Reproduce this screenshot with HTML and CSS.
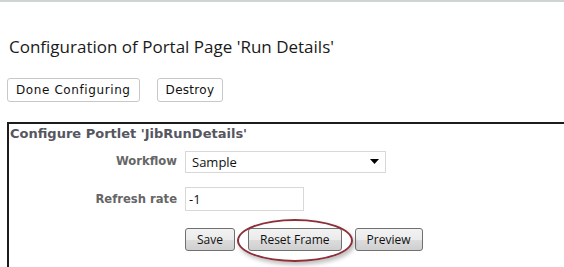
FILE: index.html
```html
<!DOCTYPE html>
<html lang="en">
<head>
    <meta charset="UTF-8">
    <title>Configuration of Portal Page</title>
    <link rel="stylesheet" href="styles.css">
</head>
<body>
    <div class="topbar"></div>

    <h1 class="page-title">Configuration of Portal Page 'Run Details'</h1>

    <div class="page-actions">
        <button class="plain-btn">Done Configuring</button>
        <button class="plain-btn">Destroy</button>
    </div>

    <section class="portlet">
        <h2>Configure Portlet 'JibRunDetails'</h2>
        <form class="portlet-form">
            <label for="workflow">Workflow</label>
            <div class="select-wrap">
                <select id="workflow">
                    <option>Sample</option>
                </select>
                <svg class="caret" width="9" height="5" viewBox="0 0 9 5"><path d="M0 0h9L4.5 5z" fill="#000"/></svg>
            </div>

            <label for="refresh">Refresh rate</label>
            <input type="text" id="refresh" value="-1">

            <div class="form-buttons">
                <button type="button" class="form-btn">Save</button>
                <span class="highlight">
                    <button type="button" class="form-btn">Reset Frame</button>
                </span>
                <button type="button" class="form-btn">Preview</button>
            </div>
        </form>
    </section>
</body>
</html>
```

FILE: styles.css
```css
body {
    margin: 0;
    padding: 0;
    background: #fff;
    font-family: "DejaVu Sans", Verdana, sans-serif;
    overflow: hidden;
}

.topbar {
    height: 2px;
    background: #ccd4d4;
}

.page-title {
    margin: 35px 0 0 9px;
    font-family: "Open Sans", sans-serif;
    font-weight: normal;
    font-size: 17px;
    line-height: 20px;
    color: #1a1a1a;
}

.page-actions {
    display: flex;
    gap: 17px;
    margin: 21px 0 0 7px;
}

.plain-btn {
    height: 24px;
    padding: 0 8px;
    background: #fff;
    border: 1px solid #c8c8c8;
    border-radius: 3px;
    font-family: "DejaVu Sans", sans-serif;
    font-size: 12px;
    letter-spacing: 0.6px;
    color: #111;
}

.plain-btn + .plain-btn {
    letter-spacing: 0.3px;
}

.portlet {
    margin: 20px 0 0 7px;
    border-top: 2px solid #1c1c1c;
    border-left: 2px solid #1c1c1c;
    height: 143px;
}

.portlet h2 {
    margin: 0 0 0 1px;
    font-family: "DejaVu Sans", sans-serif;
    font-weight: bold;
    font-size: 13px;
    line-height: 19px;
    color: #56565f;
}

.portlet-form {
    display: grid;
    grid-template-columns: 168px auto;
    column-gap: 8px;
    align-items: center;
    margin-top: 7px;
    font-family: "Open Sans", sans-serif;
}

.portlet-form label {
    justify-self: end;
    font-family: "DejaVu Sans", sans-serif;
    font-weight: bold;
    font-size: 11.6px;
    color: #666;
}

.select-wrap {
    position: relative;
    width: 201px;
    height: 22px;
}

.select-wrap select {
    appearance: none;
    width: 100%;
    height: 100%;
    padding: 0 6px;
    border: 1px solid #d8d8d8;
    background: #fff;
    font-family: "Open Sans", sans-serif;
    font-size: 13px;
    color: #111;
}

.caret {
    position: absolute;
    right: 7px;
    top: 9px;
}

#refresh {
    box-sizing: border-box;
    width: 119px;
    height: 24px;
    margin-top: 15px;
    padding: 0 3px;
    border: 1px solid #d8d8d8;
    font-family: "Open Sans", sans-serif;
    font-size: 13px;
    color: #111;
}

.portlet-form label[for="refresh"] {
    margin-top: 15px;
}

.form-buttons {
    grid-column: 2;
    display: flex;
    gap: 13px;
    margin-top: 17px;
}

.form-btn {
    height: 23px;
    padding: 0 11px;
    border: 1px solid #707070;
    border-radius: 3px;
    background: linear-gradient(#f2f2f2, #ebebeb 50%, #dddddd 50%, #cfcfcf);
    font-family: "Open Sans", sans-serif;
    font-size: 12px;
    color: #111;
}

.highlight {
    position: relative;
    display: inline-flex;
}

.highlight::after {
    content: "";
    position: absolute;
    left: -11px;
    right: -11px;
    top: -9px;
    bottom: -11px;
    border: 2px solid #8c2f38;
    border-radius: 50%;
    box-shadow: 2px 3px 4px rgba(0, 0, 0, 0.25);
}
```
